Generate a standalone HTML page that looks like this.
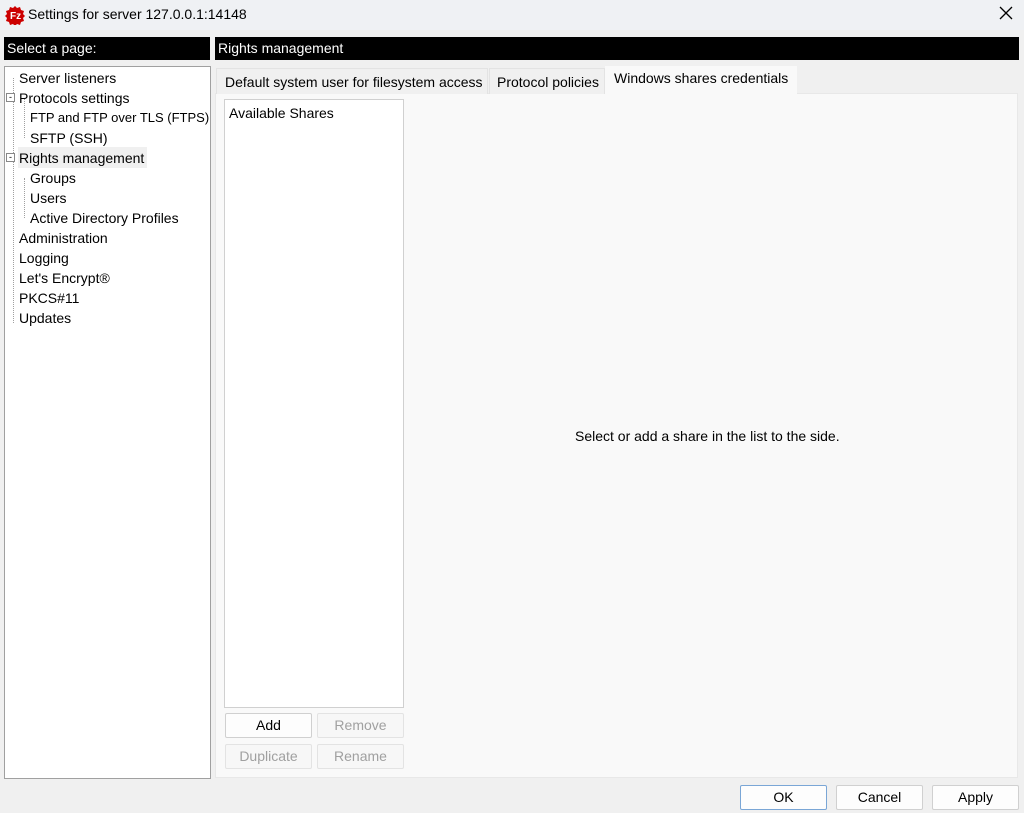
<!DOCTYPE html>
<html><head><style>
*{margin:0;padding:0;box-sizing:border-box}
body{width:1024px;height:813px;background:#f0f0f0;font-family:"Liberation Sans",sans-serif;font-size:14px;color:#000;position:relative;overflow:hidden}
.a{position:absolute;white-space:nowrap}
.hdr{background:#000;color:#fff;height:23px;line-height:23px;padding-left:3px;font-size:14px}
.btn{position:absolute;height:25px;border:1px solid #d0d0d0;background:#fdfdfd;text-align:center;line-height:23px;border-radius:2px;font-size:14px}
.dis{color:#a0a0a0;background:#f7f7f7;border-color:#e3e3e3}
.ti{position:absolute;left:19px;line-height:20px}
.tj{position:absolute;left:30px;line-height:20px}
</style></head><body>
<div class="a" style="left:0;top:0;width:1024px;height:30px;background:#eff1f4"></div>
<svg class="a" style="left:5px;top:5px" width="20" height="20" viewBox="0 0 20 20"><path d="M10 1l2 2 3-1 1 3 3 1-1 3 2 2-2 2 1 3-3 1-1 3-3-1-2 2-2-2-3 1-1-3-3-1 1-3-2-2 2-2-1-3 3-1 1-3 3 1z" fill="#c00"/><text x="5" y="14" font-size="10" fill="#fff" font-family="Liberation Sans" font-weight="bold">Fz</text></svg>
<div class="a" style="left:28px;top:6px;font-size:14px">Settings for server 127.0.0.1:14148</div>
<svg class="a" style="left:999px;top:6px" width="14" height="14" viewBox="0 0 14 14"><path d="M1 1L13 13M13 1L1 13" stroke="#000" stroke-width="1.3"/></svg>
<div class="a hdr" style="left:4px;top:37px;width:206px">Select a page:</div>
<div class="a hdr" style="left:215px;top:37px;width:804px">Rights management</div>
<div class="a" style="left:4px;top:66px;width:207px;height:713px;background:#fff;border:1px solid #a0a0a0;overflow:hidden">
<div style="position:absolute;left:8px;top:11px;width:0;height:245px;border-left:1px dotted #a0a0a0"></div>
<div style="position:absolute;left:19px;top:31px;width:0;height:40px;border-left:1px dotted #a0a0a0"></div>
<div style="position:absolute;left:19px;top:111px;width:0;height:40px;border-left:1px dotted #a0a0a0"></div>
<div style="position:absolute;left:1px;top:26px;width:9px;height:9px;border:1px solid #888;background:#fff;font-size:9px;line-height:6px;text-align:center">-</div>
<div style="position:absolute;left:1px;top:86px;width:9px;height:9px;border:1px solid #888;background:#fff;font-size:9px;line-height:6px;text-align:center">-</div>
<div style="position:absolute;left:13px;top:80px;width:129px;height:21px;background:#f0f0f0"></div>
<div class="ti" style="left:14px;top:1px">Server listeners</div>
<div class="ti" style="left:14px;top:21px">Protocols settings</div>
<div class="tj" style="left:25px;top:41px;font-size:13px">FTP and FTP over TLS (FTPS)</div>
<div class="tj" style="left:25px;top:61px">SFTP (SSH)</div>
<div class="ti" style="left:14px;top:81px">Rights management</div>
<div class="tj" style="left:25px;top:101px">Groups</div>
<div class="tj" style="left:25px;top:121px">Users</div>
<div class="tj" style="left:25px;top:141px">Active Directory Profiles</div>
<div class="ti" style="left:14px;top:161px">Administration</div>
<div class="ti" style="left:14px;top:181px">Logging</div>
<div class="ti" style="left:14px;top:201px">Let's Encrypt®</div>
<div class="ti" style="left:14px;top:221px">PKCS#11</div>
<div class="ti" style="left:14px;top:241px">Updates</div>
</div>
<div class="a" style="left:215px;top:93px;width:803px;height:685px;background:#f9f9f9;border:1px solid #e8e8e8"></div>
<div class="a" style="left:216px;top:68px;width:272px;height:26px;background:#f0f0f0;border:1px solid #e3e3e3;border-bottom:none;padding-left:8px;line-height:26px">Default system user for filesystem access</div>
<div class="a" style="left:489px;top:68px;width:116px;height:26px;background:#f0f0f0;border:1px solid #e3e3e3;border-bottom:none;padding-left:7px;line-height:26px">Protocol policies</div>
<div class="a" style="left:605px;top:66px;width:192px;height:28px;background:#f9f9f9;padding-left:9px;line-height:24px">Windows shares credentials</div>
<div class="a" style="left:224px;top:99px;width:180px;height:609px;background:#fff;border:1px solid #d0d0d0;padding:5px 4px">Available Shares</div>
<div class="a" style="left:575px;top:428px">Select or add a share in the list to the side.</div>
<div class="btn" style="left:225px;top:713px;width:87px">Add</div>
<div class="btn dis" style="left:317px;top:713px;width:87px">Remove</div>
<div class="btn dis" style="left:225px;top:744px;width:87px">Duplicate</div>
<div class="btn dis" style="left:317px;top:744px;width:87px">Rename</div>
<div class="btn" style="left:740px;top:785px;width:87px;border-color:#7aa6d6">OK</div>
<div class="btn" style="left:836px;top:785px;width:87px">Cancel</div>
<div class="btn" style="left:932px;top:785px;width:87px">Apply</div>
</body></html>
